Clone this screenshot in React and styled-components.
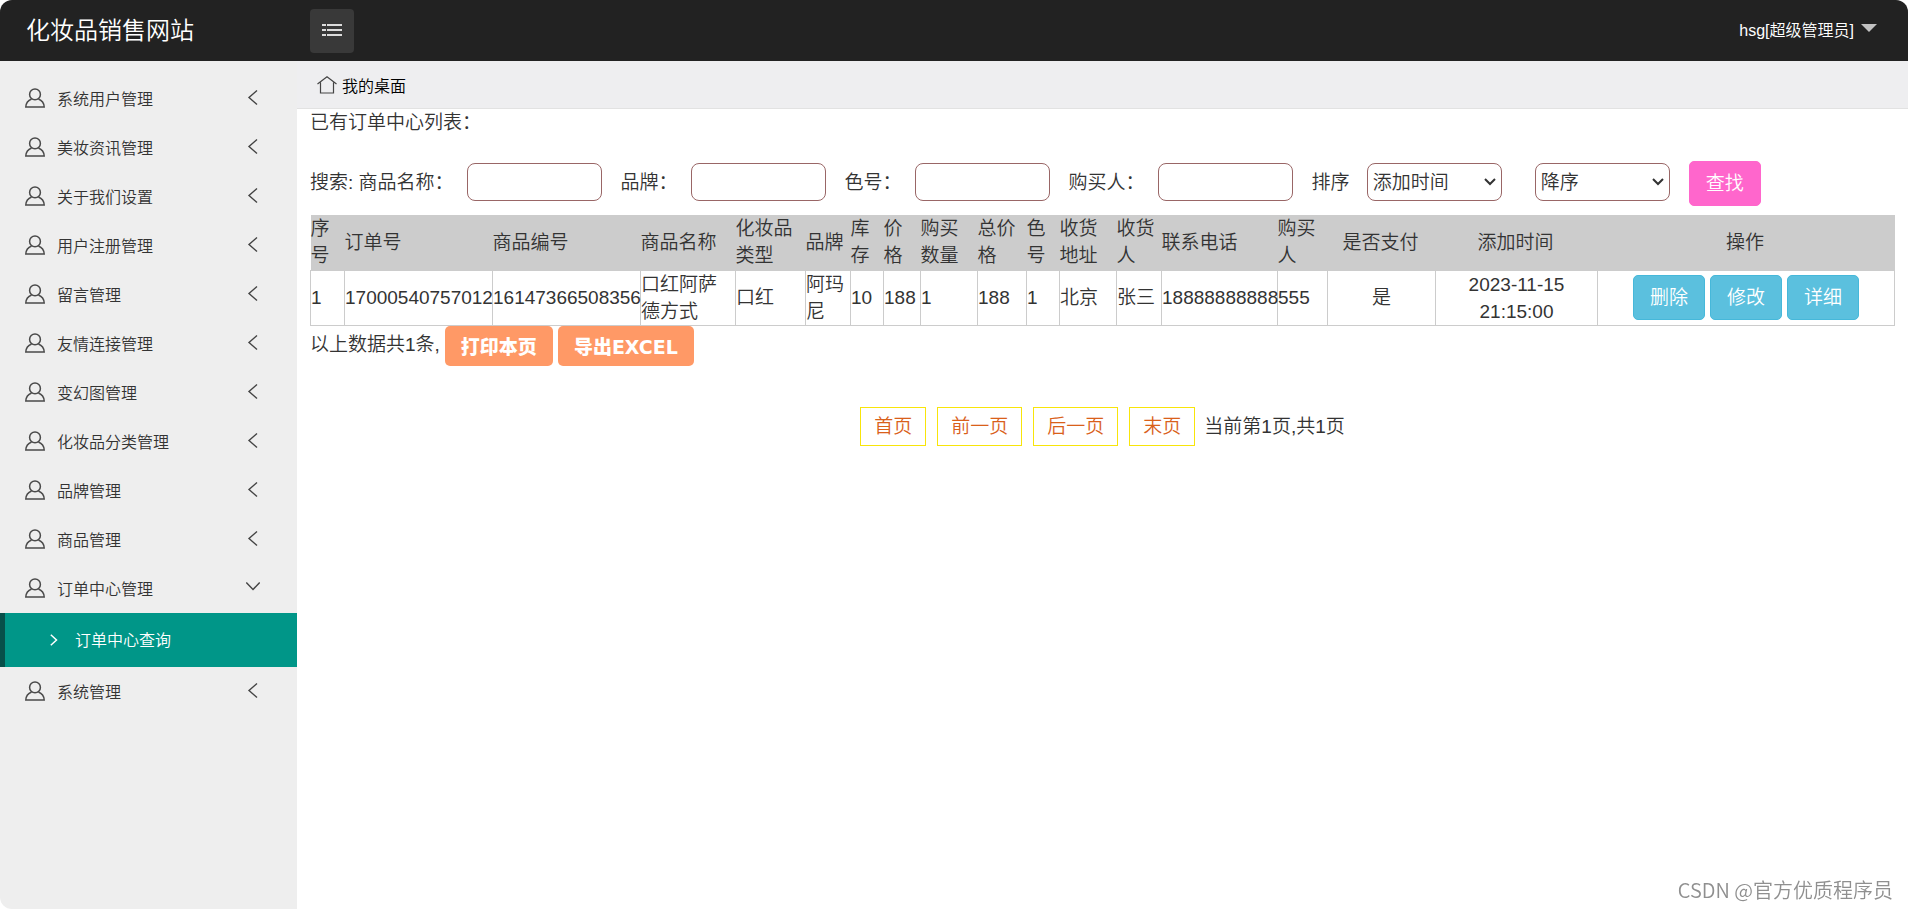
import React, { useState } from "react";
import styled, { createGlobalStyle, css } from "styled-components";

const GlobalStyle = createGlobalStyle`
  * {
    box-sizing: border-box;
  }

  body {
    margin: 0;
    background-color: white;
    color: #333333;
    font-family: "Liberation Sans", "Noto Sans CJK SC", sans-serif;
    font-size: 19px;
    font-weight: 350;
    line-height: 27px;
  }

  button,
  input,
  select {
    font: inherit;
    color: inherit;
  }

  button {
    cursor: pointer;
  }

  a {
    color: inherit;
    text-decoration: none;
  }
`;

const Page = styled.div`
  min-height: 100vh;
  display: flex;
  flex-direction: column;
  border-radius: 12px;
  overflow: hidden;
`;

const Header = styled.header`
  height: 61px;
  display: flex;
  align-items: center;
  background-color: #222222;
  color: white;
`;

const Logo = styled.a`
  width: 310px;
  padding-left: 26px;
  font-size: 24px;
`;

const MenuButton = styled.button`
  width: 44px;
  height: 44px;
  display: flex;
  align-items: center;
  justify-content: center;
  padding: 0;
  border: 0;
  border-radius: 4px;
  background-color: #393939;
`;

const UserButton = styled.button`
  display: flex;
  align-items: center;
  gap: 7px;
  margin-left: auto;
  padding: 0 31px 0 0;
  border: 0;
  background: none;
  font-size: 16px;
`;

const Caret = styled.span`
  margin-bottom: 6px;
  border: 8px solid transparent;
  border-top-color: #c2c2c2;
  border-bottom: 0;
`;

const Body = styled.div`
  display: flex;
  flex: 1;
`;

const Sidebar = styled.nav`
  width: 297px;
  flex-shrink: 0;
  padding-top: 13px;
  background-color: #eeeeee;
  font-size: 16px;
`;

const MenuItem = styled.button`
  width: 100%;
  height: 49px;
  display: flex;
  align-items: center;
  padding: 2px 37px 0 25px;
  border: 0;
  background: none;
  text-align: left;

  svg {
    margin-bottom: 4px;
  }
`;

const MenuLabel = styled.span`
  flex: 1;
  margin-left: 12px;
`;

const SubItem = styled.a`
  height: 54px;
  display: flex;
  align-items: center;
  gap: 17px;
  padding-left: 45px;
  border-left: 5px solid #07504a;
  background-color: #009688;
  color: white;
`;

const Main = styled.main`
  flex: 1;
  min-width: 0;
`;

const TabBar = styled.div`
  height: 48px;
  display: flex;
  align-items: center;
  padding-left: 20px;
  border-bottom: 1px solid #e2e2e2;
  background-color: #eeeef0;
`;

const Tab = styled.a`
  display: flex;
  align-items: center;
  gap: 5px;
  padding-top: 4px;
  color: black;
  font-size: 16px;

  svg {
    margin-bottom: 4px;
  }
`;

const Content = styled.div`
  padding: 0 13px;
`;

const ListTitle = styled.h1`
  margin: 0;
  font-size: 19px;
  font-weight: 350;
`;

const SearchForm = styled.form`
  display: flex;
  align-items: flex-start;
  margin: 25px 0 9px;
`;

const Field = styled.div`
  display: flex;
  align-items: center;
  gap: ${(props) => props.$gap || 13}px;
  margin-right: 19px;
  padding-top: 2px;
  white-space: pre;
`;

const control = css`
  width: 135px;
  height: 38px;
  border: 1px solid #996666;
  border-radius: 8px;
  background-color: white;
`;

const TextInput = styled.input`
  ${control}
  padding: 0 6px;
`;

const Select = styled.select`
  ${control}
  padding: 0 20px 0 5px;
  appearance: none;
  background-image: url("data:image/svg+xml,%3Csvg xmlns='http://www.w3.org/2000/svg' width='12' height='8' fill='none' stroke='%23333' stroke-width='2'%3E%3Cpath d='M1 1l5 5 5-5'/%3E%3C/svg%3E");
  background-repeat: no-repeat;
  background-position: right 5px center;
`;

const Sorts = styled.div`
  display: flex;
  gap: 33px;
`;

const Button = styled.button`
  height: 45px;
  padding: 0 16px;
  border: 1px solid ${(props) => props.$border};
  border-radius: 5px;
  background-color: ${(props) => props.$bg};
  color: white;
`;

const Table = styled.table`
  width: 100%;
  table-layout: fixed;
  border-collapse: collapse;
`;

const HeadCell = styled.th`
  height: 55px;
  padding: 0 2px 0 0;
  background-color: #cccccc;
  font-weight: 350;
  text-align: ${(props) => (props.$center ? "center" : "left")};
`;

const Cell = styled.td`
  height: 55px;
  padding: 0;
  border: 1px solid #cccccc;
  text-align: ${(props) => (props.$center ? "center" : "left")};
`;

const Actions = styled.div`
  display: flex;
  justify-content: center;
  gap: 5px;
`;

const Summary = styled.div`
  display: flex;
  align-items: flex-start;
  gap: 5px;
`;

const SummaryText = styled.span`
  padding-top: 5px;
`;

const ExportButton = styled.button`
  height: 40px;
  padding: 4px 16px 0;
  border: 0;
  border-radius: 5px;
  background-color: #ff9966;
  color: white;
  font-family: "DejaVu Sans", "Noto Sans CJK SC", sans-serif;
  font-weight: 900;
`;

const Pagination = styled.nav`
  display: flex;
  align-items: center;
  justify-content: center;
  gap: 9px;
  margin-top: 41px;
`;

const PageLinks = styled.div`
  display: flex;
  gap: 11px;
`;

const PageLink = styled.a`
  padding: 5px 13px;
  border: 1px solid #f8e50a;
  color: #d9601a;
`;

const Watermark = styled.div`
  position: fixed;
  right: 15px;
  bottom: 6px;
  color: #8f8f8f;
  font-family: "Noto Sans CJK SC", sans-serif;
  font-size: 20px;
`;

const UserIcon = () => (
  <svg width="20" height="20" viewBox="0 0 20 20" fill="none" stroke="#4a4a4a" strokeWidth="1.5">
    <circle cx="10" cy="6.4" r="5.4" />
    <path d="M6.600 11C3.400 12.200 1 14.800 0.800 19h18.400c-.2-4.200-2.600-6.800-5.800-8" />
  </svg>
);

const ChevronLeft = () => (
  <svg width="14" height="16" viewBox="0 0 14 16" fill="none" stroke="#444444" strokeWidth="1.4">
    <path d="M11 0.5L3 7.5l8 7" />
  </svg>
);

const ChevronDown = () => (
  <svg width="14" height="16" viewBox="0 0 14 16" fill="none" stroke="#444444" strokeWidth="1.4">
    <path d="M0.3 2.5L7 9.5l6.7-7" />
  </svg>
);

const ChevronRight = () => (
  <svg width="8" height="12" viewBox="0 0 8 12" fill="none" stroke="white" strokeWidth="1.5">
    <path d="M0.8 0.8L6.5 6L0.8 11.2" />
  </svg>
);

const ListIcon = () => (
  <svg width="20" height="14" viewBox="0 0 20 14" fill="#dddddd">
    <path d="M0 0h4v2H0zM5 0h15v2H5zM0 5h4v2H0zM5 5h15v2H5zM0 10h4v2H0zM5 10h15v2H5z" />
  </svg>
);

const HomeIcon = () => (
  <svg width="20" height="18" viewBox="0 0 20 18" fill="none" stroke="#444444" strokeWidth="1.2">
    <path d="M0.5 8L10 0.8L19.5 8M3.500 6.500V17h13V6.500" />
  </svg>
);

const menus = [
  { title: "系统用户管理" },
  { title: "美妆资讯管理" },
  { title: "关于我们设置" },
  { title: "用户注册管理" },
  { title: "留言管理" },
  { title: "友情连接管理" },
  { title: "变幻图管理" },
  { title: "化妆品分类管理" },
  { title: "品牌管理" },
  { title: "商品管理" },
  { title: "订单中心管理", children: ["订单中心查询"] },
  { title: "系统管理" },
];

const columns = [
  { title: "序号", width: 34 },
  { title: "订单号", width: 148 },
  { title: "商品编号", width: 148 },
  { title: "商品名称", width: 95 },
  { title: "化妆品类型", width: 70 },
  { title: "品牌", width: 45 },
  { title: "库存", width: 33 },
  { title: "价格", width: 37 },
  { title: "购买数量", width: 57 },
  { title: "总价格", width: 49 },
  { title: "色号", width: 33 },
  { title: "收货地址", width: 57 },
  { title: "收货人", width: 45 },
  { title: "联系电话", width: 116 },
  { title: "购买人", width: 50 },
  { title: "是否支付", width: 108, center: true },
  { title: "添加时间", width: 162, center: true },
  { title: "操作", width: 297, center: true },
];

const orders = [
  [
    "1",
    "17000540757012",
    "16147366508356",
    "口红阿萨德方式",
    "口红",
    "阿玛尼",
    "10",
    "188",
    "1",
    "188",
    "1",
    "北京",
    "张三",
    "18888888888",
    "555",
    "是",
    "2023-11-15 21:15:00",
  ],
];

const fields = [
  { id: "name", label: "搜索: 商品名称：" },
  { id: "brand", label: "品牌：" },
  { id: "shade", label: "色号：" },
  { id: "buyer", label: "购买人：" },
];

const SideMenu = () => {
  const [opened, setOpened] = useState("订单中心管理");

  return (
    <Sidebar>
      {menus.map(({ title, children }) => (
        <React.Fragment key={title}>
          <MenuItem onClick={() => setOpened(opened === title ? null : title)}>
            <UserIcon />
            <MenuLabel>{title}</MenuLabel>
            {opened === title ? <ChevronDown /> : <ChevronLeft />}
          </MenuItem>
          {opened === title &&
            children &&
            children.map((child) => (
              <SubItem key={child} href="#">
                <ChevronRight />
                {child}
              </SubItem>
            ))}
        </React.Fragment>
      ))}
    </Sidebar>
  );
};

const Search = () => (
  <SearchForm onSubmit={(event) => event.preventDefault()}>
    {fields.map(({ id, label }) => (
      <Field key={id}>
        <label htmlFor={id}>{label}</label>
        <TextInput id={id} name={id} />
      </Field>
    ))}
    <Field $gap={17}>
      <label htmlFor="sort">排序</label>
      <Sorts>
        <Select id="sort">
          <option>添加时间</option>
        </Select>
        <Select aria-label="顺序">
          <option>降序</option>
          <option>升序</option>
        </Select>
      </Sorts>
    </Field>
    <Button $bg="#ff66cc" $border="#ff66cc">
      查找
    </Button>
  </SearchForm>
);

const OrderTable = () => (
  <Table>
    <colgroup>
      {columns.map(({ title, width }) => (
        <col key={title} style={{ width }} />
      ))}
    </colgroup>
    <thead>
      <tr>
        {columns.map(({ title, center }) => (
          <HeadCell key={title} $center={center}>
            {title}
          </HeadCell>
        ))}
      </tr>
    </thead>
    <tbody>
      {orders.map((order) => (
        <tr key={order[1]}>
          {order.map((value, index) => (
            <Cell key={index} $center={columns[index].center}>
              {value}
            </Cell>
          ))}
          <Cell>
            <Actions>
              {["删除", "修改", "详细"].map((action) => (
                <Button key={action} type="button" $bg="#5bc0de" $border="#46b8da">
                  {action}
                </Button>
              ))}
            </Actions>
          </Cell>
        </tr>
      ))}
    </tbody>
  </Table>
);

export default () => (
  <>
    <GlobalStyle />
    <Page>
      <Header>
        <Logo href="#">化妆品销售网站</Logo>
        <MenuButton aria-label="菜单">
          <ListIcon />
        </MenuButton>
        <UserButton>
          hsg[超级管理员]
          <Caret />
        </UserButton>
      </Header>
      <Body>
        <SideMenu />
        <Main>
          <TabBar>
            <Tab href="#">
              <HomeIcon />
              我的桌面
            </Tab>
          </TabBar>
          <Content>
            <ListTitle>已有订单中心列表：</ListTitle>
            <Search />
            <OrderTable />
            <Summary>
              <SummaryText>以上数据共1条,</SummaryText>
              <ExportButton>打印本页</ExportButton>
              <ExportButton>导出EXCEL</ExportButton>
            </Summary>
            <Pagination>
              <PageLinks>
                <PageLink href="#">首页</PageLink>
                <PageLink href="#">前一页</PageLink>
                <PageLink href="#">后一页</PageLink>
                <PageLink href="#">末页</PageLink>
              </PageLinks>
              <span>当前第1页,共1页</span>
            </Pagination>
          </Content>
        </Main>
      </Body>
      <Watermark>CSDN @官方优质程序员</Watermark>
    </Page>
  </>
);
